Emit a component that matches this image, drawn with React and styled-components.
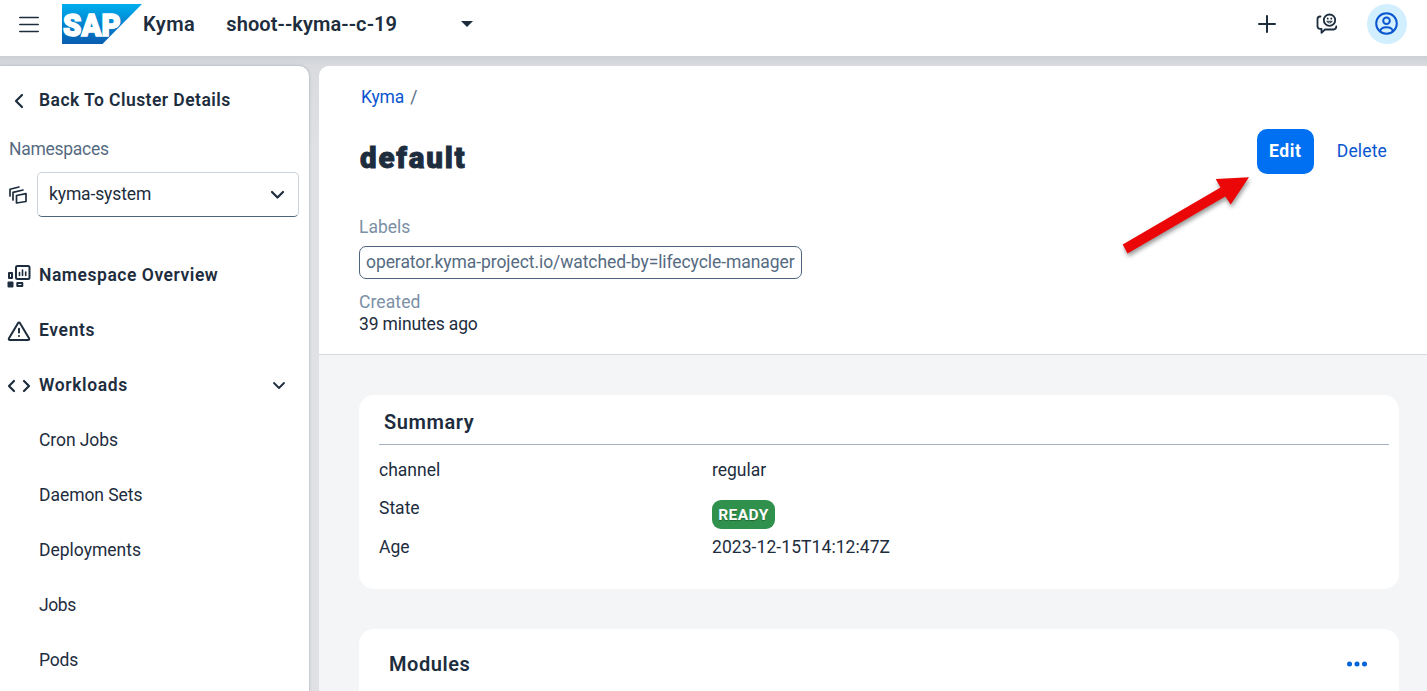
import React from "react";
import styled, { createGlobalStyle } from "styled-components";

const ink = "#1d2d3e";
const blue = "#0a55d0";

const GlobalStyle = createGlobalStyle`
  * { box-sizing: border-box; }
  html, body { margin: 0; height: 100%; overflow: hidden; }
  body {
    font-family: Roboto, "Liberation Sans", sans-serif;
    font-size: 17.5px;
    line-height: 22px;
    color: ${ink};
  }
  svg { display: block; flex: none; }
`;

const Text = styled.span`
  letter-spacing: ${(p) => p.$track || 0}px;
  white-space: nowrap;
`;

const Page = styled.div`
  height: 691px;
  width: 1427px;
  display: flex;
  flex-direction: column;
  background: #d5d8dc;
  position: relative;
  overflow: hidden;
`;

const ShellBar = styled.header`
  height: 56px;
  flex: none;
  display: flex;
  align-items: center;
  padding: 0 20px 8px 19px;
  background: #fff;
  box-shadow: 0 1px 3px rgba(34, 53, 72, 0.2);
  font-size: 20px;
  font-weight: 600;
`;

const LogoLink = styled.div`
  margin: 0 1px 0 23px;
`;

const Cluster = styled.div`
  display: flex;
  align-items: center;
  justify-content: space-between;
  width: 247px;
  margin-left: 31px;
`;

const Actions = styled.div`
  display: flex;
  align-items: center;
  margin-left: auto;
  gap: 40px;
`;

const Avatar = styled.div`
  width: 40px;
  height: 40px;
  margin-left: -11px;
  border-radius: 50%;
  background: #d1efff;
  display: grid;
  place-items: center;
  padding: 0 2px 2px 0;
`;

const Body = styled.div`
  flex: 1;
  display: flex;
  gap: 10px;
  padding-top: 10px;
  background: linear-gradient(#cdd1d6 0, #d9dbdf 10px, #dcdee2 60px, #dfe1e4 100px);
`;

const Sidebar = styled.nav`
  width: 309px;
  background: #fff;
  border-radius: 0 10px 0 0;
  box-shadow: 0 0 3px rgba(34, 53, 72, 0.3);
  display: flex;
  flex-direction: column;
`;

const BackRow = styled.div`
  display: flex;
  align-items: center;
  height: 68px;
  padding-left: 13px;
  gap: 14px;
  font-weight: 600;

  > svg { margin-top: 2px; }
`;

const NamespaceLabel = styled.div`
  padding-left: 9px;
  height: 34px;
  margin-top: 4px;
  color: #556b82;
`;

const NamespaceRow = styled.div`
  display: flex;
  align-items: center;
  gap: 9px;
  padding: 0 10px 0 8px;
`;

const Select = styled.div`
  flex: 1;
  height: 45px;
  display: flex;
  align-items: center;
  justify-content: space-between;
  padding: 0 13px 2px 11px;
  border: 1px solid #cdd3da;
  border-bottom-color: #4d647c;
  border-radius: 5px;

  > svg { margin-top: 2px; }
`;

const NavList = styled.div`
  margin-top: 30px;
`;

const NavItem = styled.div`
  height: 55px;
  display: flex;
  align-items: center;
  padding: 0 23px 0 ${(p) => (p.$sub ? 39 : 7)}px;
  gap: 8px;
  font-weight: ${(p) => (p.$sub ? 400 : 600)};

  > svg { margin-top: 2px; }
  > svg:last-child { margin-left: auto; }
`;

const Main = styled.main`
  flex: 1;
  background: #f4f5f7;
  border-radius: 10px 0 0 0;
  overflow: hidden;
`;

const PageHeader = styled.section`
  height: 289px;
  background: #fff;
  border-bottom: 1px solid #d5d9dd;
  padding: 20px 28px 0 40px;
`;

const Breadcrumb = styled.div`
  padding-left: 2px;
  color: #556b82;
  display: flex;
  gap: 6px;
`;

const Link = styled(Text)`
  color: ${blue};
`;

const TitleRow = styled.div`
  display: flex;
  justify-content: space-between;
  align-items: flex-start;
  margin-top: 21px;
  height: 87px;
`;

const Title = styled.h1`
  margin: 13px 0 0 1px;
  font-size: 29.5px;
  line-height: 32px;
  font-weight: 900;
  -webkit-text-stroke: 0.9px ${ink};
`;

const Buttons = styled.div`
  display: flex;
  gap: 11px;
`;

const Button = styled.button`
  height: 45px;
  padding: 0 12px 2px;
  min-width: 57px;
  border: 0;
  border-radius: 10px;
  font: inherit;
  font-weight: ${(p) => (p.$primary ? 700 : 400)};
  color: ${(p) => (p.$primary ? "#fff" : blue)};
  background: ${(p) => (p.$primary ? "#0070f2" : "transparent")};
`;

const FieldLabel = styled.div`
  color: #7b8fa5;
`;

const Token = styled.div`
  width: 443px;
  height: 33px;
  margin: 8px 0 12px;
  padding: 4px 6px;
  border: 1px solid #4d647c;
  border-radius: 7px;
  color: #556b82;
`;

const Content = styled.section`
  padding: 40px 28px 0 40px;
  display: flex;
  flex-direction: column;
  gap: 40px;
`;

const Card = styled.article`
  background: #fff;
  border-radius: 15px;
  padding: 0 10px 0 20px;
  height: ${(p) => p.$height}px;
`;

const CardTitle = styled.h2`
  margin: 0;
  height: ${(p) => p.$height}px;
  padding: 0 ${(p) => p.$inset * 2 + 2}px 0 ${(p) => p.$inset}px;
  display: flex;
  align-items: center;
  justify-content: space-between;
  font-size: 20px;
  font-weight: 600;
  border-bottom: ${(p) => (p.$ruled ? "1px solid #a3b1c0" : "0")};
  padding-top: ${(p) => (p.$ruled ? 5 : 0)}px;
`;

const Properties = styled.dl`
  margin: 0;
  padding-top: 14px;
  display: grid;
  grid-template-columns: 333px 1fr;
  grid-template-rows: 38px 39px 38px;

  dt, dd { margin: 0; }
`;

const Status = styled.span`
  display: inline-flex;
  align-items: center;
  justify-content: center;
  width: 63px;
  height: 29px;
  margin-top: 3px;
  border-radius: 9px;
  background: #30914c;
  color: #fff;
  font-size: 15.5px;
  font-weight: 700;
  text-shadow: 0 1px 1px rgba(0, 0, 0, 0.3);
`;

const Pointer = styled.svg`
  position: absolute;
  left: 1110px;
  top: 165px;
  filter: drop-shadow(1px 3px 2px rgba(0, 0, 0, 0.4));
`;

const Stroke = ({ w, h, d, s = 2, box, children }) => (
  <svg width={w} height={h} viewBox={box || `0 0 ${w} ${h}`} fill="none" stroke={ink}
    strokeWidth={s} strokeLinecap="round" strokeLinejoin="round">
    {d && <path d={d} />}
    {children}
  </svg>
);

const SapLogo = () => (
  <svg width="80" height="40" viewBox="0 0 80 40">
    <defs>
      <linearGradient id="sap" x1="0" y1="0" x2="0" y2="1">
        <stop offset="0" stopColor="#00aeef" />
        <stop offset=".5" stopColor="#0084cf" />
        <stop offset="1" stopColor="#0a5cb0" />
      </linearGradient>
    </defs>
    <path d="M0 0H80L40.500 40H0Z" fill="url(#sap)" />
    <text x="1" y="31.800" fill="#fff" stroke="#fff" strokeWidth="1.600" fontFamily="Roboto, sans-serif"
      fontWeight="900" fontSize="32" textLength="57.500" lengthAdjust="spacingAndGlyphs">SAP</text>
  </svg>
);

const FeedbackIcon = () => (
  <Stroke w={22} h={22} s={1.8}>
    <path d="M4.500 3.500H4Q1.500 3.500 1.500 6V13Q1.500 15.800 4 15.800H5.500V19.800L9 16.500H17.500Q20.300 16.300 20.300 13.300" />
    <circle cx="13.500" cy="7.200" r="5.700" />
    <path d="M11 8.600Q13.500 11.600 16 8.600Z" strokeWidth="1" />
    <path d="M11.700 5.500v.2M15.300 5.500v.2" />
  </Stroke>
);

const PersonIcon = () => (
  <svg width="23" height="23" viewBox="0 0 23 23" fill="none" stroke="#0a55d0" strokeWidth="2">
    <circle cx="11.500" cy="11.500" r="10.300" />
    <circle cx="11.500" cy="8.700" r="3.300" />
    <path d="M5 19.200Q6 15.200 11.500 15.200T18 19.200" />
  </svg>
);

const NamespaceIcon = () => (
  <Stroke w={20} h={20} s={1.7}>
    <path d="M2 11V4.300L11 2M5 15V7.300L15 5M8.500 10.500L18 8.700V16.500L8.500 18Z" />
  </Stroke>
);

const OverviewIcon = () => (
  <Stroke w={24} h={24} s={2}>
    <rect x="9" y="2" width="13.500" height="13" rx="1.500" />
    <path d="M12.500 8.500v3M15.500 6v5.500M18.700 8v3.500" strokeWidth="1.600" />
    <rect x="2" y="9" width="3" height="5" />
    <rect x="10.300" y="19" width="5" height="3" />
    <rect x="1.500" y="18.500" width="4" height="4" fill={ink} />
  </Stroke>
);

const WarningIcon = () => (
  <Stroke w={24} h={22}>
    <path d="M12 2.500Q12.700 2.500 13.200 3.400L22 18.200Q22.800 20 21 20H3Q1.200 20 2 18.200L10.800 3.400Q11.300 2.500 12 2.500ZM12 8.700V12.500M12 15.900v.2" />
  </Stroke>
);

const navigation = [
  ["Namespace Overview", <OverviewIcon />, 0.53],
  ["Events", <WarningIcon />, 0.65],
  ["Workloads", <Stroke w={24} h={14} s={2.2} d="M7 2L2 7L7 12M17 2L22 7L17 12" />, 0.62],
];
const workloads = [
  ["Cron Jobs", -0.08],
  ["Daemon Sets", -0.05],
  ["Deployments", 0],
  ["Jobs", -0.4],
  ["Pods", -0.2],
];

export default function App() {
  return (
    <Page>
      <GlobalStyle />
      <ShellBar>
        <Stroke w={20} h={17} s={1.7} d="M.8 1.500H19.200M.8 8.500H19.200M.8 15.500H19.200" />
        <LogoLink><SapLogo /></LogoLink>
        <Text $track={0.5}>Kyma</Text>
        <Cluster>
          <Text $track={0.08}>shoot--kyma--c-19</Text>
          <svg width="12" height="6" viewBox="0 0 12 6"><path d="M0 0H12L6 6Z" fill={ink} /></svg>
        </Cluster>
        <Actions>
          <Stroke w={18} h={18} d="M9 1V17M1 9H17" />
          <FeedbackIcon />
          <Avatar><PersonIcon /></Avatar>
        </Actions>
      </ShellBar>
      <Body>
        <Sidebar>
          <BackRow>
            <Stroke w={12} h={16} s={2.2} d="M9 2L3 8L9 14" />
            <Text $track={0.45}>Back To Cluster Details</Text>
          </BackRow>
          <NamespaceLabel><Text $track={-0.27}>Namespaces</Text></NamespaceLabel>
          <NamespaceRow>
            <NamespaceIcon />
            <Select>
              <Text $track={-0.13}>kyma-system</Text>
              <Stroke w={15} h={10} s={2.2} d="M2 2L7.500 7.500L13 2" />
            </Select>
          </NamespaceRow>
          <NavList>
            {navigation.map(([label, icon, track]) => (
              <NavItem key={label}>
                {icon}
                <Text $track={track}>{label}</Text>
                {label === "Workloads" && <Stroke w={14} h={9} s={1.8} d="M2 2L7 7L12 2" />}
              </NavItem>
            ))}
            {workloads.map(([label, track]) => (
              <NavItem key={label} $sub><Text $track={track}>{label}</Text></NavItem>
            ))}
          </NavList>
        </Sidebar>
        <Main>
          <PageHeader>
            <Breadcrumb><Link $track={-0.15}>Kyma</Link><Text>/</Text></Breadcrumb>
            <TitleRow>
              <Title><Text $track={1.8}>default</Text></Title>
              <Buttons>
                <Button $primary><Text $track={0.6}>Edit</Text></Button>
                <Button><Text $track={0.15}>Delete</Text></Button>
              </Buttons>
            </TitleRow>
            <FieldLabel><Text>Labels</Text></FieldLabel>
            <Token><Text $track={-0.075}>operator.kyma-project.io/watched-by=lifecycle-manager</Text></Token>
            <FieldLabel><Text $track={0.1}>Created</Text></FieldLabel>
            <div><Text $track={-0.14}>39 minutes ago</Text></div>
          </PageHeader>
          <Content>
            <Card $height={194}>
              <CardTitle $height={50} $inset={5} $ruled><Text $track={0.6}>Summary</Text></CardTitle>
              <Properties>
                <dt><Text>channel</Text></dt>
                <dd><Text>regular</Text></dd>
                <dt><Text>State</Text></dt>
                <dd><Status><Text $track={0.4}>READY</Text></Status></dd>
                <dt><Text>Age</Text></dt>
                <dd><Text $track={0.07}>2023-12-15T14:12:47Z</Text></dd>
              </Properties>
            </Card>
            <Card $height={100}>
              <CardTitle $height={70} $inset={10}>
                <Text $track={0.55}>Modules</Text>
                <svg width="20" height="6" viewBox="0 0 20 6" fill="#0064d9">
                  <circle cx="2.500" cy="3" r="2.500" /><circle cx="10" cy="3" r="2.500" /><circle cx="17.500" cy="3" r="2.500" />
                </svg>
              </CardTitle>
            </Card>
          </Content>
        </Main>
      </Body>
      <Pointer width="150" height="100" viewBox="0 0 150 100">
        <path d="M12.700 79.500L110.500 22.500L105.700 14L139 12.200L120.700 39.500L115.300 31.500L17.500 88.500Z" fill="#eb0707" />
      </Pointer>
    </Page>
  );
}
